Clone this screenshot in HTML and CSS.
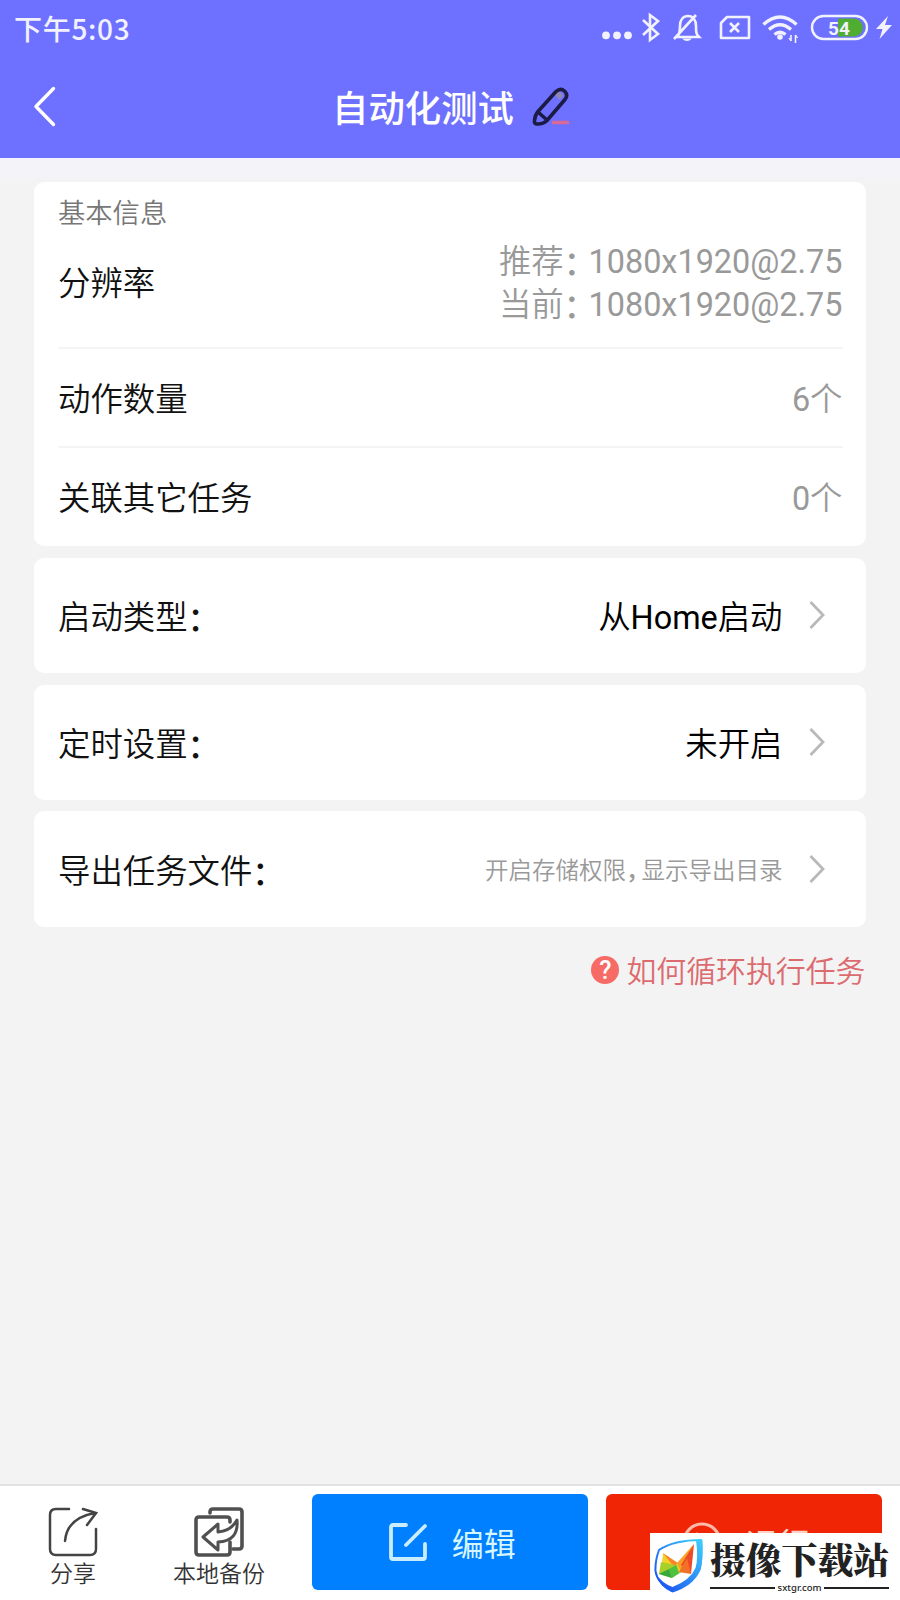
FILE: index.html
```
<!DOCTYPE html>
<html lang="zh-CN">
<head>
  <meta charset="UTF-8">
  <meta name="viewport" content="width=device-width, initial-scale=1.0">
  <title>自动化测试</title>
  <link rel="stylesheet" href="styles.css">
</head>
<body>
  <header class="header">
    <div class="status-bar">
      <span class="time">下午5:03</span>
      <svg class="status-icons" width="300" height="56" viewBox="600 0 300 56" fill="none" stroke="#f1f1ff" stroke-width="2.6">
        <g fill="#f1f1ff" stroke="none">
          <circle cx="606" cy="35.3" r="3.9"/>
          <circle cx="617" cy="35.3" r="3.9"/>
          <circle cx="628" cy="35.3" r="3.9"/>
        </g>
        <path d="M643 20l15 14-8 6V15l8 6-15 14"/>
        <!-- 静音 -->
        <path d="M677 37c3-3 3-6 3-11 0-6 3-10 8-10 5 0 8 4 8 10 0 6 0 8 3 11zM674 39l22-24"/>
        <path d="M682 38.500q5 5 10 0z" fill="#f1f1ff" stroke="none"/>
        <path d="M727 17h22v21h-28V23z" stroke-linejoin="round"/>
        <path d="M730 23l9 9M739 23l-9 9"/>
        <!-- WiFi -->
        <g stroke-width="3.4">
          <path d="M763.500 24.500q16.500-15 33 0"/>
          <path d="M769 29.500q11-9.500 22 0"/>
          <path d="M774.500 34.500q5.500-4.500 11 0"/>
        </g>
        <circle cx="780" cy="37" r="2.800" fill="#f1f1ff" stroke="none"/>
        <path d="M791 35v6M795.500 35v8" stroke-width="1.600"/>
        <path d="M791 41l-2-3M795.500 35l2 3" stroke-width="1.300"/>
        <!-- 电量 -->
        <path d="M838 18.500h16a9 9 0 0 1 0 18h-16z" fill="#4fae32" stroke="none"/>
        <rect x="812" y="16" width="55" height="23" rx="11.500" stroke-width="2.400"/>
        <text class="battery-text" x="839" y="34.500" text-anchor="middle">54</text>
        <path d="M888 16l-12 13h6.500l-3 10 12.500-14h-7z" fill="#f1f1ff" stroke="none"/>
      </svg>
    </div>
    <div class="title-bar">
      <svg class="back" width="24" height="42" viewBox="0 0 24 42" fill="none" stroke="#fff" stroke-width="3.4" stroke-linecap="round" stroke-linejoin="round">
        <path d="M21.500 2.500L4 20.500l17.500 18"/>
      </svg>
      <h1 class="title">自动化测试</h1>
      <svg class="pen" width="38" height="40" viewBox="0 0 38 40" fill="none" stroke="#1c1b45" stroke-width="3.600" stroke-linejoin="round">
        <path d="M25 10l4-4" stroke="#8f86b5" stroke-width="7"/>
        <path d="M24 4.500q4.500-4 8.500-.5 4 4 .5 8.500L15 33.500q-4 4-10.500 3.500-2.500-.5-2-3.500.5-5.500 3.500-9zM6 25l9 8"/>
        <path d="M20 35.500h17" stroke="#d86a98" stroke-width="3.500"/>
      </svg>
    </div>
  </header>

  <main class="content">
    <section class="card info">
      <h2 class="card-title">基本信息</h2>
      <div class="row resolution">
        <span class="label">分辨率</span>
        <div class="value">
          <div>推荐<span class="colon">：</span><span class="num">1080x1920@2.75</span></div>
          <div>当前<span class="colon">：</span><span class="num">1080x1920@2.75</span></div>
        </div>
      </div>
      <div class="row">
        <span class="label">动作数量</span>
        <span class="value count"><span class="num">6</span>个</span>
      </div>
      <div class="row">
        <span class="label">关联其它任务</span>
        <span class="value count"><span class="num">0</span>个</span>
      </div>
    </section>

    <section class="card setting">
      <span class="label">启动类型<span class="colon">：</span></span>
      <span class="setting-value">从<span class="num">Home</span>启动</span>
      <svg class="arrow" width="16" height="30" viewBox="0 0 16 30"><path d="M1.500 2L14 15 1.500 28"/></svg>
    </section>
    <section class="card setting">
      <span class="label">定时设置<span class="colon">：</span></span>
      <span class="setting-value">未开启</span>
      <svg class="arrow" width="16" height="30" viewBox="0 0 16 30"><path d="M1.500 2L14 15 1.500 28"/></svg>
    </section>
    <section class="card setting">
      <span class="label">导出任务文件<span class="colon">：</span></span>
      <span class="setting-value hint">开启存储权限<span class="comma">，</span>显示导出目录</span>
      <svg class="arrow" width="16" height="30" viewBox="0 0 16 30"><path d="M1.500 2L14 15 1.500 28"/></svg>
    </section>

    <a class="help"><span class="help-icon">?</span><span class="help-text">如何循环执行任务</span></a>
  </main>

  <footer class="footer">
    <div class="tool">
      <svg width="50" height="50" viewBox="0 0 50 50" fill="none" stroke="#444" stroke-width="2.500" stroke-linecap="round">
        <path d="M21 2H8Q2 2 2 8v34q0 6 6 6h34q6 0 6-6V22M17 34Q19 11 47 6M35 2l13 4-9 12"/>
      </svg>
      <span>分享</span>
    </div>
    <div class="tool">
      <svg width="50" height="50" viewBox="0 0 50 50" fill="none" stroke="#505050" stroke-width="3.600" stroke-linejoin="round" stroke-linecap="round">
        <path d="M16 6V5q0-3 3-3h26q3 0 3 3v34q0 3-3 3h-6"/>
        <path d="M36 15v-2q0-3-3-3H5q-3 0-3 3v32q0 3 3 3h28q3 0 3-3V35"/>
        <path d="M9 30l15-13v8q13-1 19-12 2 21-19 22v8z" stroke-width="3"/>
      </svg>
      <span>本地备份</span>
    </div>
    <button class="btn edit">
      <svg width="40" height="40" viewBox="0 0 40 40" fill="none" stroke="#c9ecff" stroke-width="3.800" stroke-linecap="round" stroke-linejoin="round">
        <path d="M18 3H5q-2 0-2 2v30q0 2 2 2h30q2 0 2-2V22M18 23L37 4"/>
      </svg>
      <span>编辑</span>
    </button>
    <button class="btn run">
      <svg width="40" height="40" viewBox="0 0 40 40" fill="none" stroke="#ffb9a8" stroke-width="3.200">
        <circle cx="20" cy="20" r="18"/>
        <path d="M16 13l11 7-11 7z"/>
      </svg>
      <span>运行</span>
    </button>
  </footer>

  <div class="watermark">
    <svg width="50" height="58" viewBox="0 0 50 58">
      <defs>
        <linearGradient id="shield" x1="1" y1="0" x2="0" y2="1">
          <stop offset="0" stop-color="#3fd0fb"/>
          <stop offset="1" stop-color="#1747f0"/>
        </linearGradient>
      </defs>
      <path d="M5 13Q20 3 47 3q1 17-1 28Q40 46 18 54 3 46 1.500 34 1 24 5 13z" fill="none" stroke="url(#shield)" stroke-width="2"/>
      <path d="M42 3h6.500q1 19-2 30-7 16-28 22.500Q5 50 1.500 36q6 10 17 14 18-7 23-19 3-10 .5-28z" fill="url(#shield)"/>
      <path d="M9 16l13 12-15 9z" fill="#f4d028"/>
      <path d="M9 16l15 10-3 5z" fill="#f7862a"/>
      <path d="M7 25l14 3-3 13L5 37z" fill="#a9cf2b"/>
      <path d="M5 37l10-5 3 9z" fill="#35a83e"/>
      <path d="M18 41l-3-9 9-5 5 7z" fill="#4fc13f"/>
      <path d="M22 27l9-5-2 12-4 2z" fill="#e6cf26"/>
      <path d="M40 7L23 26l4 9z" fill="#f9a126"/>
      <path d="M40 7l-3 30-10-9z" fill="#ed4b28"/>
      <path d="M25 35l8-14 4 16z" fill="#f37029"/>
    </svg>
    <div class="mark-text">
      <div class="mark-name">摄像下载站</div>
      <div class="mark-url"><span>sxtgr.com</span></div>
    </div>
  </div>
</body>
</html>
```
FILE: styles.css
```
* {
  box-sizing: border-box;
}
body {
  margin: 0;
  height: 1600px;
  position: relative;
  display: flex;
  flex-direction: column;
  overflow: hidden;
  background-color: #f3f3f3;
  color: #111;
  font-family: Roboto, "Noto Sans CJK SC", sans-serif;
  font-size: 32.4px;
  font-weight: 350;
}
svg {
  display: block;
  flex-shrink: 0;
}
.header {
  height: 158px;
  background-color: #6e70ff;
  color: #fff;
}
.status-bar {
  height: 56px;
  padding-left: 14px;
  display: flex;
  justify-content: space-between;
  align-items: center;
}
.time {
  color: #f1f1ff;
  font-family: "Noto Sans CJK SC", sans-serif;
  font-size: 28px;
  font-weight: 500;
  letter-spacing: 0.7px;
}
.battery-text {
  font-family: Roboto, sans-serif;
  font-size: 19px;
  font-weight: 700;
  fill: #f1f1ff;
  stroke: none;
}
.title-bar {
  height: 101px;
  display: flex;
  align-items: center;
  padding-left: 32px;
}
.title {
  margin: 0 0 2px 276px;
  font-size: 36.4px;
  font-weight: 500;
}
.pen {
  margin-left: 18px;
}
.content {
  flex: 1;
  padding: 24px 34.5px 0 34px;
  display: flex;
  flex-direction: column;
  gap: 11.7px;
  background: linear-gradient(#f3f3f9 19px, #f3f3f3 19px);
}
.card {
  background-color: #fff;
  border-radius: 10px;
  padding: 0 23px 0 24px;
}
.info {
  height: 364px;
}
.card-title {
  margin: 0;
  padding-top: 14px;
  font-size: 27.3px;
  line-height: 36px;
  font-weight: 350;
  color: #777;
}
.row {
  height: 99px;
  display: flex;
  justify-content: space-between;
  align-items: center;
}
.row + .row {
  border-top: 2px solid #f4f4f4;
}
.resolution {
  height: 115px;
  padding-bottom: 15px;
}
.label {
  padding-bottom: 2px;
}
.resolution .label {
  padding-bottom: 4px;
}
.value {
  padding-top: 4px;
  color: #999;
  line-height: 43.4px;
}
.count {
  padding-top: 6px;
}
.num {
  font-weight: 400;
}
.colon {
  font-weight: 500;
  line-height: 0;
  vertical-align: -2px;
  letter-spacing: -7.5px;
}
.setting {
  height: 115.2px;
  padding-right: 41px;
  display: flex;
  align-items: center;
}
.setting-value {
  margin-left: auto;
  padding-bottom: 2px;
  color: #000;
}
.hint {
  padding-bottom: 0;
  font-size: 23.5px;
  color: #999;
}
.comma {
  font-weight: 500;
  letter-spacing: -8px;
}
.arrow {
  margin-left: 26px;
  fill: none;
  stroke: #b9b9b9;
  stroke-width: 2.8;
}
.help {
  margin-top: 11px;
  display: flex;
  align-items: center;
  justify-content: flex-end;
  font-size: 29.9px;
  line-height: 40px;
  color: #dc6b70;
}
.help-text {
  padding-top: 3px;
}
.help-icon {
  width: 28px;
  height: 28px;
  margin: 0 7px 2px 0;
  border-radius: 50%;
  background-color: #f76b66;
  color: #fff;
  font-size: 25px;
  font-weight: 500;
  line-height: 29px;
  text-align: center;
}
.footer {
  height: 116px;
  border-top: 2px solid #e2e2e2;
  background-color: #fff;
  display: flex;
}
.tool {
  width: 146px;
  padding-top: 21px;
  display: flex;
  flex-direction: column;
  align-items: center;
  font-size: 23px;
  line-height: 36px;
  color: #333;
}
.btn {
  width: 275.5px;
  height: 96px;
  margin: 8px 0 0 20px;
  padding: 0 0 0 4px;
  border: none;
  border-radius: 6px;
  display: flex;
  align-items: center;
  justify-content: center;
  gap: 24px;
  font-family: inherit;
  font-size: 32px;
}
.edit {
  background-color: #007fff;
  color: #d5f5ff;
}
.run {
  margin-left: 18.5px;
  background-color: #ef2506;
  color: #ffd0c4;
}
.watermark {
  position: absolute;
  right: 0;
  bottom: 0;
  width: 250px;
  height: 67px;
  padding: 4px 0 0 4px;
  background-color: #fff;
  color: #222;
  display: flex;
  gap: 6px;
}
.mark-name {
  font-family: "Noto Serif CJK SC", "Noto Sans CJK SC", serif;
  font-size: 35.8px;
  font-weight: 900;
  line-height: 44px;
  white-space: nowrap;
}
.mark-url {
  width: 179px;
  display: flex;
  align-items: center;
  gap: 3px;
  font-family: "Noto Sans", sans-serif;
  font-size: 9.5px;
  font-weight: 500;
  line-height: 14px;
}
.mark-url::before,
.mark-url::after {
  content: "";
  flex: 1;
  height: 2px;
  background-color: #222;
}
```
